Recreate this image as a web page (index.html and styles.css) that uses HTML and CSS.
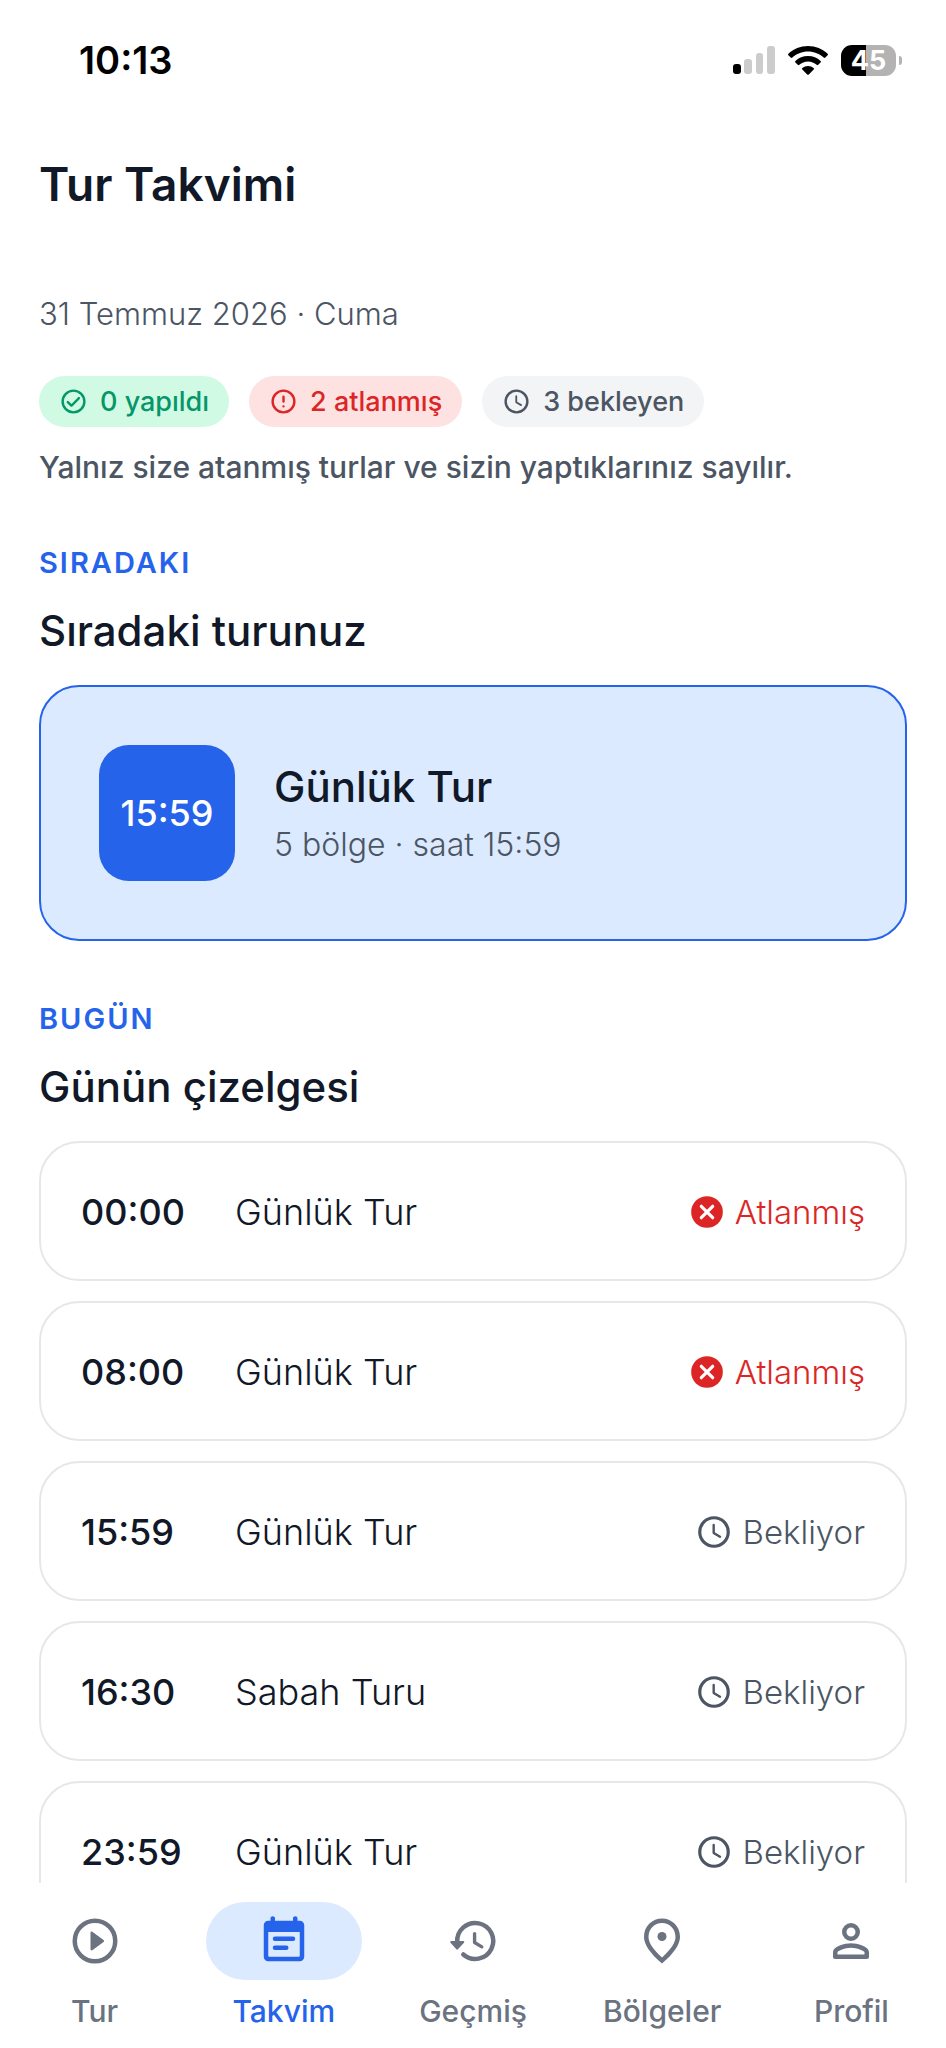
FILE: index.html
```html
<!DOCTYPE html>
<html lang="tr">
  <head>
    <meta charset="UTF-8" />
    <meta name="viewport" content="width=device-width, initial-scale=1.0" />
    <title>Tur Takvimi</title>
    <link rel="stylesheet" href="styles.css">
  </head>
  <body>
    <!-- shared icons -->
    <svg class="sprite" aria-hidden="true">
      <symbol id="check" viewBox="0 0 24 24">
        <g fill="none" stroke="currentColor" stroke-width="2" stroke-linecap="round" stroke-linejoin="round">
          <circle cx="12" cy="12" r="9" />
          <path d="M7.3 12.5l3 3 6.2-6.3" />
        </g>
      </symbol>
      <symbol id="alert" viewBox="0 0 24 24">
        <g fill="none" stroke="currentColor" stroke-width="2" stroke-linecap="round">
          <circle cx="12" cy="12" r="9" />
          <path d="M12 8v4M12 16v0" />
        </g>
      </symbol>
      <symbol id="clock" viewBox="0 0 24 24">
        <g fill="none" stroke="currentColor" stroke-linecap="round" stroke-linejoin="round">
          <circle cx="12" cy="12" r="9" stroke-width="2" />
          <path d="M11.8 7.6v5l4 2.4" stroke-width="1.5" />
        </g>
      </symbol>
      <symbol id="cancel" viewBox="0 0 24 24">
        <circle cx="12" cy="12" r="10" fill="currentColor" />
        <path d="M8.4 8.4l7.2 7.2M15.6 8.4l-7.2 7.2" stroke="#fff" stroke-width="2" stroke-linecap="round" />
      </symbol>
    </svg>

    <div class="app">
      <header class="status-bar">
        <time class="clock">10:13</time>
        <div class="status-icons">
          <svg class="signal" viewBox="0 0 42 28" aria-hidden="true">
            <rect x="0" y="18" width="8" height="10" rx="3" />
            <g fill="#ccc">
              <rect x="11" y="13" width="8" height="15" rx="3" />
              <rect x="23" y="7" width="7" height="21" rx="3" />
              <rect x="34" y="0" width="8" height="28" rx="3" />
            </g>
          </svg>
          <svg class="wifi" viewBox="0 0 40 30" aria-hidden="true">
            <path d="M20 1C12.400 1 5.500 3.900.4 8.700c-.5.500-.5 1.100 0 1.600l2.300 2.300c.5.500 1.100.5 1.600 0C8.400 8.700 13.900 6.400 20 6.400s11.600 2.300 15.700 6.200c.5.500 1.100.5 1.600 0l2.300-2.300c.5-.5.5-1.100 0-1.600C34.500 3.900 27.600 1 20 1z" />
            <path d="M20 11c-4.900 0-9.300 1.900-12.600 4.900-.5.500-.5 1.100 0 1.600l2.400 2.300c.5.500 1 .5 1.500 0 2.300-2.100 5.400-3.400 8.700-3.400s6.400 1.300 8.700 3.400c.5.500 1 .5 1.500 0l2.400-2.300c.5-.5.5-1.100 0-1.600C29.300 12.900 24.900 11 20 11z" />
            <path d="M20 21c-2.200 0-4.100.8-5.600 2-.5.400-.5 1-.1 1.500l4.900 4.900c.5.500 1.100.5 1.600 0l4.900-4.900c.4-.5.4-1.100-.1-1.500-1.500-1.200-3.400-2-5.600-2z" />
          </svg>
          <div class="battery"><span class="level">45</span><i class="nub"></i></div>
        </div>
      </header>

      <main class="content">
        <h1>Tur Takvimi</h1>
        <p class="date">31 Temmuz 2026 · Cuma</p>

        <div class="chips">
          <span class="chip done"><svg class="chip-icon"><use href="#check" /></svg>0 yapıldı</span>
          <span class="chip missed"><svg class="chip-icon"><use href="#alert" /></svg>2 atlanmış</span>
          <span class="chip waiting"><svg class="chip-icon"><use href="#clock" /></svg>3 bekleyen</span>
        </div>
        <p class="note">Yalnız size atanmış turlar ve sizin yaptıklarınız sayılır.</p>

        <section>
          <p class="eyebrow">SIRADAKI</p>
          <h2>Sıradaki turunuz</h2>
          <div class="next-card">
            <time class="next-time">15:59</time>
            <div class="next-info">
              <h3>Günlük Tur</h3>
              <p>5 bölge · saat 15:59</p>
            </div>
          </div>
        </section>

        <section>
          <p class="eyebrow">BUGÜN</p>
          <h2>Günün çizelgesi</h2>
          <ul class="tours">
            <li class="tour">
              <time>00:00</time><span class="name">Günlük Tur</span>
              <span class="state missed"><svg class="state-icon"><use href="#cancel" /></svg>Atlanmış</span>
            </li>
            <li class="tour">
              <time>08:00</time><span class="name">Günlük Tur</span>
              <span class="state missed"><svg class="state-icon"><use href="#cancel" /></svg>Atlanmış</span>
            </li>
            <li class="tour">
              <time>15:59</time><span class="name">Günlük Tur</span>
              <span class="state"><svg class="state-icon"><use href="#clock" /></svg>Bekliyor</span>
            </li>
            <li class="tour">
              <time>16:30</time><span class="name">Sabah Turu</span>
              <span class="state"><svg class="state-icon"><use href="#clock" /></svg>Bekliyor</span>
            </li>
            <li class="tour">
              <time>23:59</time><span class="name">Günlük Tur</span>
              <span class="state"><svg class="state-icon"><use href="#clock" /></svg>Bekliyor</span>
            </li>
          </ul>
        </section>
      </main>

      <nav class="tabs">
        <a class="tab" href="#tur">
          <span class="pill">
            <svg viewBox="0 0 24 24" aria-hidden="true">
              <circle cx="12" cy="12" r="9" fill="none" stroke="currentColor" stroke-width="2" />
              <path d="M10 8.300v7.400c0 .4.500.7.800.4l5-3.700c.3-.2.300-.6 0-.8l-5-3.700c-.3-.3-.8 0-.8.400z" />
            </svg>
          </span>
          Tur
        </a>
        <a class="tab active" href="#takvim" aria-current="page">
          <span class="pill">
            <svg viewBox="0 0 24 24" aria-hidden="true">
              <path fill-rule="evenodd" d="M7 1c.6 0 1 .4 1 1v1h8V2c0-.6.400-1 1-1s1 .4 1 1v1h1c1.100 0 2 .9 2 2v14c0 1.100-.9 2-2 2H5c-1.100 0-2-.9-2-2V5c0-1.100.9-2 2-2h1V2c0-.6.400-1 1-1zM5 8v10.500c0 .3.200.5.5.5h13c.3 0 .5-.2.5-.5V8z" />
              <path d="M8 11h8M8 15h5" stroke="currentColor" stroke-width="2" stroke-linecap="round" />
            </svg>
          </span>
          Takvim
        </a>
        <a class="tab" href="#gecmis">
          <span class="pill">
            <svg viewBox="0 0 24 24" aria-hidden="true">
              <g fill="none" stroke="currentColor" stroke-linecap="round" stroke-linejoin="round">
                <path d="M5 12.500A8 8 0 1 1 7.700 18" stroke-width="2" />
                <path d="M12.700 8.700v4l3.200 1.900" stroke-width="1.500" />
              </g>
              <path d="M2.300 12h5.400c.4 0 .6.500.3.800l-2.700 2.900c-.2.200-.5.200-.7 0L2 12.800c-.3-.3-.1-.8.300-.8z" />
            </svg>
          </span>
          Geçmiş
        </a>
        <a class="tab" href="#bolgeler">
          <span class="pill">
            <svg viewBox="0 0 24 24" aria-hidden="true">
              <path fill-rule="evenodd" d="M12 2c4.200 0 8 3.220 8 8.200 0 3.320-2.670 7.250-8 11.800-5.330-4.550-8-8.480-8-11.800C4 5.220 7.800 2 12 2zM18 10.200C18 6.570 15.350 4 12 4s-6 2.570-6 6.200c0 2.340 1.950 5.440 6 9.140 4.050-3.700 6-6.800 6-9.140z" />
              <circle cx="12" cy="10" r="2" />
            </svg>
          </span>
          Bölgeler
        </a>
        <a class="tab" href="#profil">
          <span class="pill">
            <svg viewBox="0 0 24 24" aria-hidden="true">
              <circle cx="12" cy="8" r="3" fill="none" stroke="currentColor" stroke-width="2" />
              <path fill-rule="evenodd" d="M12 13c-2.700 0-8 1.300-8 4v2c0 .6.400 1 1 1h14c.6 0 1-.4 1-1v-2c0-2.700-5.300-4-8-4zM6 18v-1c.2-.7 3.300-2 6-2s5.800 1.300 6 2v1z" />
            </svg>
          </span>
          Profil
        </a>
      </nav>
    </div>
  </body>
</html>
```
FILE: styles.css
```css
* {
  margin: 0;
  padding: 0;
  box-sizing: border-box;
}
body {
  font-family: Inter, "Open Sans", sans-serif;
  color: #111827;
  background-color: #fff;
}
ul {
  list-style: none;
}
.sprite {
  display: none;
}
.app {
  display: flex;
  flex-direction: column;
  height: 100vh;
}

/* status bar */
.status-bar {
  display: flex;
  justify-content: space-between;
  align-items: center;
  height: 120px;
  padding: 0 44px 0 79px;
  color: #000;
}
.clock {
  font-size: 38px;
  font-weight: 600;
}
.status-icons {
  display: flex;
  align-items: center;
  gap: 13px;
}
.signal {
  width: 42px;
  height: 28px;
}
.wifi {
  width: 40px;
  height: 30px;
}
.battery {
  display: flex;
  align-items: center;
  gap: 3px;
}
.level {
  width: 55px;
  border-radius: 11px;
  background: linear-gradient(to right, #000 45%, #b3b3b3 45%);
  color: #fff;
  font-size: 27px;
  font-weight: 700;
  line-height: 31px;
  text-align: center;
}
.nub {
  width: 3px;
  height: 9px;
  border-radius: 0 4px 4px 0;
  background-color: #b3b3b3;
}

/* scrolling page */
.content {
  flex: 1;
  min-height: 0;
  padding: 32px 39px 0;
  overflow-y: auto;
  scrollbar-width: none;
}
h1 {
  font-size: 46px;
  font-weight: 600;
  line-height: 64px;
}
.date {
  margin-top: 72px;
  color: #4b5563;
  font-size: 31px;
  font-weight: 300;
  line-height: 52px;
}
.chips {
  display: flex;
  gap: 20px;
  margin-top: 36px;
}
.chip {
  display: flex;
  align-items: center;
  gap: 12px;
  height: 51px;
  padding: 0 20px;
  border-radius: 26px;
  font-size: 27px;
  font-weight: 500;
}
.chip-icon {
  width: 29px;
  height: 29px;
}
.chip.done {
  background-color: #d1fae5;
  color: #059669;
}
.chip.missed {
  background-color: #fee2e2;
  color: #dc2626;
}
.chip.waiting {
  background-color: #f3f4f6;
  color: #4b5563;
}
.note {
  margin-top: 20px;
  color: #4b5563;
  font-size: 30px;
  font-weight: 500;
  line-height: 40px;
}
.eyebrow {
  margin-top: 56px;
  color: #2563eb;
  font-size: 29px;
  font-weight: 600;
  letter-spacing: 2px;
  line-height: 40px;
}
h2,
h3 {
  font-size: 42px;
  font-weight: 500;
  line-height: 56px;
}
h2 {
  margin: 20px 0 26px;
}

/* next tour */
.next-card {
  display: flex;
  align-items: center;
  gap: 39px;
  margin-bottom: 58px;
  padding: 58px;
  border: 2px solid #2563eb;
  border-radius: 40px;
  background-color: #dbeafe;
}
.next-time {
  width: 136px;
  border-radius: 30px;
  background-color: #2563eb;
  color: #fff;
  font-size: 36px;
  font-weight: 500;
  line-height: 136px;
  text-align: center;
}
.next-info {
  padding-top: 4px;
}
.next-info p {
  margin-top: 4px;
  color: #4b5563;
  font-size: 32px;
  font-weight: 300;
  line-height: 52px;
}

/* today's list */
.tour {
  display: flex;
  align-items: center;
  height: 140px;
  margin-bottom: 20px;
  padding: 2px 40px 0;
  border: 2px solid #e5e7eb;
  border-radius: 40px;
  font-size: 36px;
}
.tour time {
  width: 154px;
  font-weight: 500;
}
.name {
  flex: 1;
  font-weight: 300;
}
.state {
  display: flex;
  align-items: center;
  gap: 9px;
  color: #4b5563;
  font-size: 33px;
  font-weight: 300;
}
.state.missed {
  color: #dc2626;
}
.state-icon {
  width: 38px;
  height: 38px;
}

/* bottom navigation */
.tabs {
  display: flex;
  height: 165px;
  padding-top: 19px;
  background-color: #fff;
}
.tab {
  display: flex;
  flex: 1;
  flex-direction: column;
  align-items: center;
  gap: 11px;
  color: #6b7280;
  font-size: 30px;
  font-weight: 500;
  line-height: 40px;
  text-decoration: none;
}
.pill {
  display: flex;
  justify-content: center;
  align-items: center;
  width: 156px;
  height: 78px;
  border-radius: 39px;
}
.pill svg {
  width: 54px;
  height: 54px;
  fill: currentColor;
}
.active {
  color: #2563eb;
}
.active .pill {
  background-color: #dbeafe;
}
```
